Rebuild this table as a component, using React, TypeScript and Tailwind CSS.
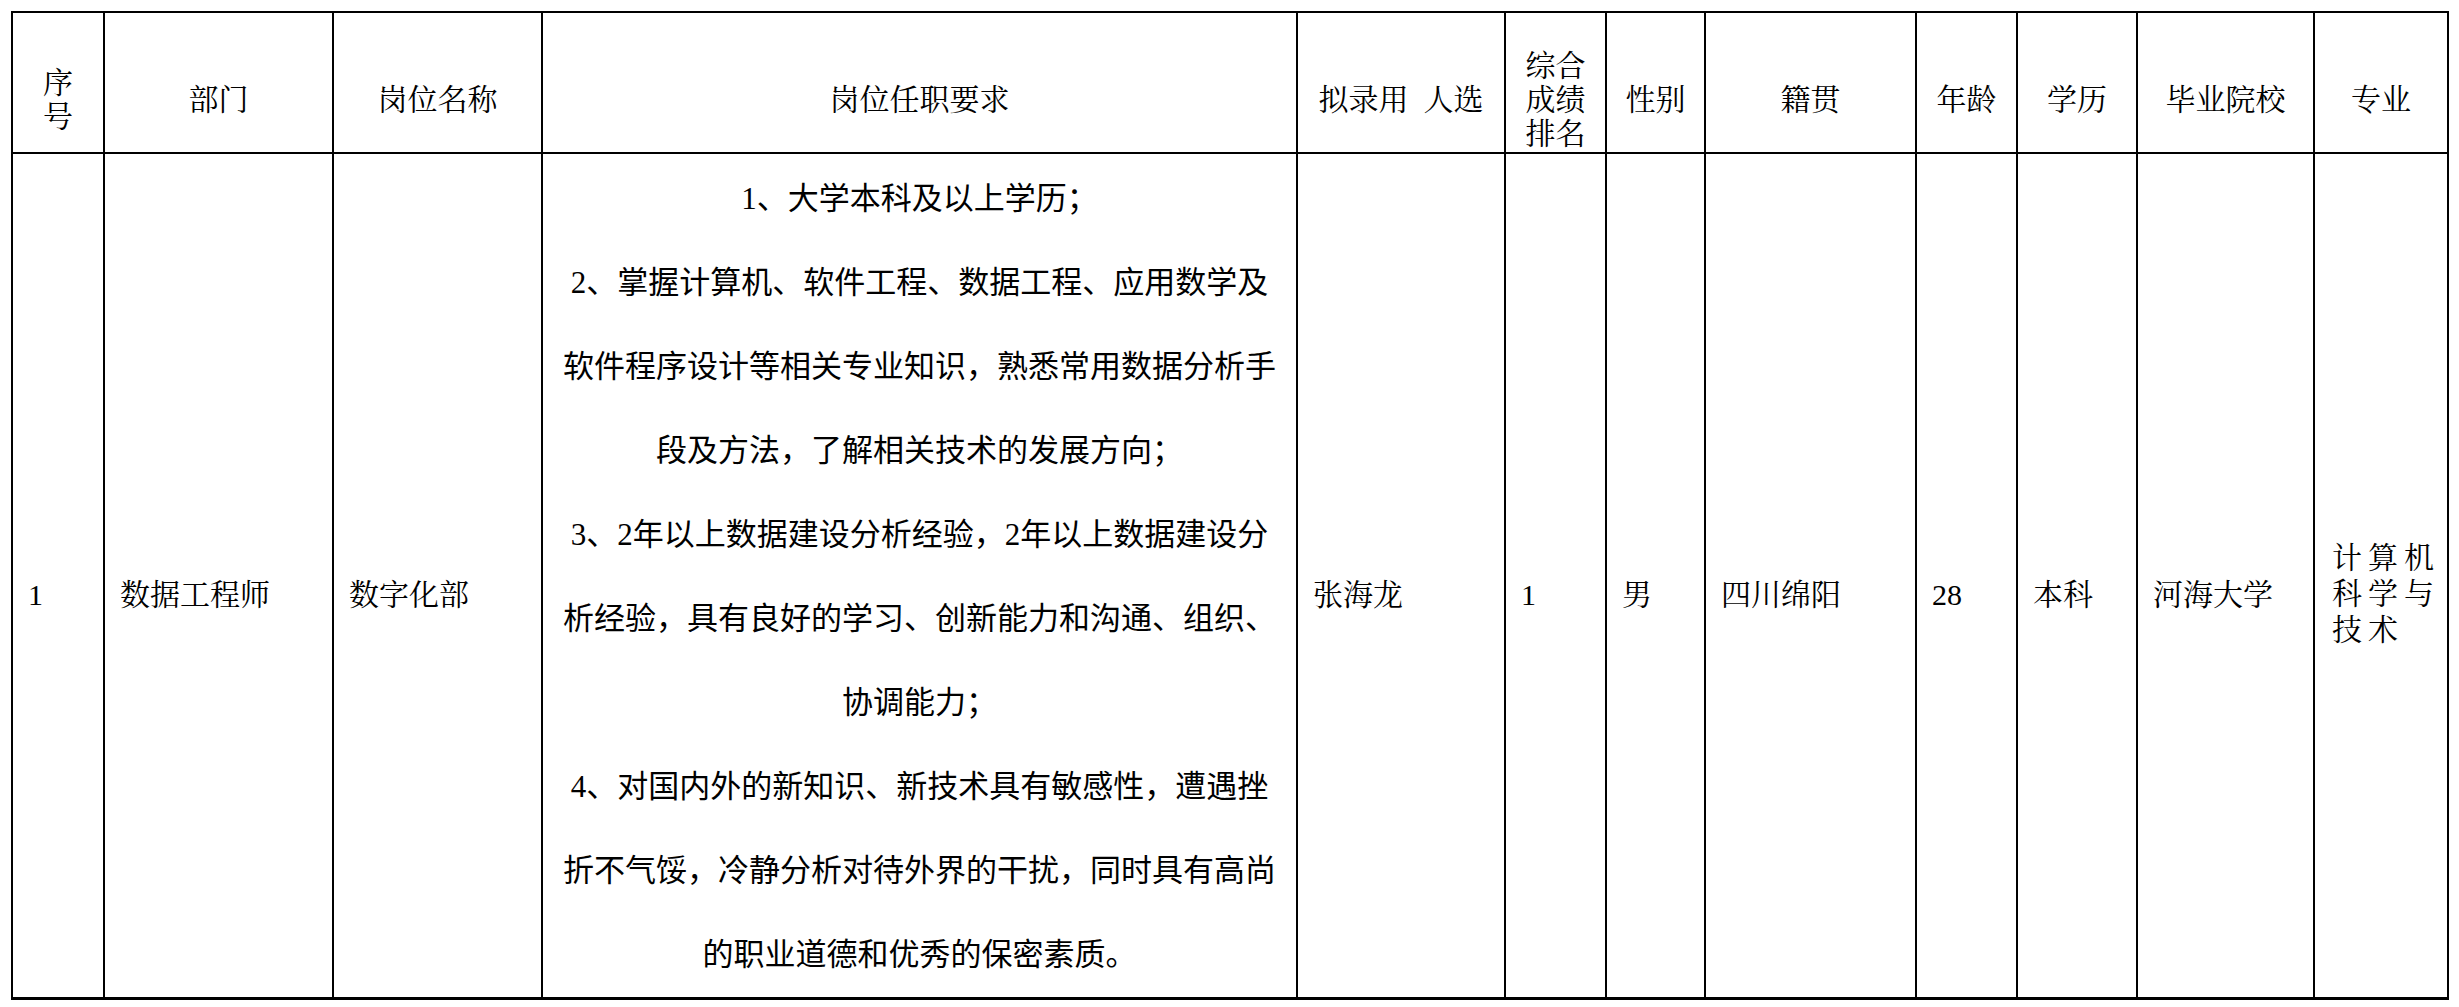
const HEADERS: string[][] = [
  ["序", "号"],
  ["部门"],
  ["岗位名称"],
  ["岗位任职要求"],
  ["拟录用\u2002人选"],
  ["综合", "成绩", "排名"],
  ["性别"],
  ["籍贯"],
  ["年龄"],
  ["学历"],
  ["毕业院校"],
  ["专业"],
];

const REQUIREMENTS = [
  "1、大学本科及以上学历；",
  "2、掌握计算机、软件工程、数据工程、应用数学及",
  "软件程序设计等相关专业知识，熟悉常用数据分析手",
  "段及方法，了解相关技术的发展方向；",
  "3、2年以上数据建设分析经验，2年以上数据建设分",
  "析经验，具有良好的学习、创新能力和沟通、组织、",
  "协调能力；",
  "4、对国内外的新知识、新技术具有敏感性，遭遇挫",
  "折不气馁，冷静分析对待外界的干扰，同时具有高尚",
  "的职业道德和优秀的保密素质。",
];

const BEFORE = ["1", "数据工程师", "数字化部"];
const AFTER = ["张海龙", "1", "男", "四川绵阳", "28", "本科", "河海大学"];
const MAJOR = ["计算机", "科学与", "技术"];

function BodyCell({ text }: { text: string }) {
  return (
    <div className="flex items-center bg-white pl-[15px] pt-[37px] whitespace-nowrap">{text}</div>
  );
}

export default function App() {
  return (
    <div className="min-h-screen bg-white pl-[11px] pt-[11px] text-black font-['Liberation_Serif','Noto_Serif_CJK_SC','Noto_Sans_CJK_SC',serif] text-[30px]">
      <div className="inline-grid grid-cols-[90px_227px_207px_753px_206px_99px_97px_209px_99px_118px_175px_132px] grid-rows-[139px_843px] gap-[2px] bg-black p-[2px] pb-[3px]">
        {HEADERS.map((lines, i) => (
          <div
            key={i}
            className="flex flex-col items-center justify-center bg-white pt-[34px] text-center leading-[34px] whitespace-nowrap"
          >
            {lines.map((l) => (
              <div key={l}>{l}</div>
            ))}
          </div>
        ))}

        {BEFORE.map((t, i) => (
          <BodyCell key={"b" + i} text={t} />
        ))}

        <div className="flex flex-col items-center bg-white pt-[3px] text-[31px] leading-[84px] font-['Liberation_Serif','Noto_Sans_CJK_SC',sans-serif]">
          {REQUIREMENTS.map((l) => (
            <div key={l} className="whitespace-nowrap">
              {l}
            </div>
          ))}
        </div>

        {AFTER.map((t, i) => (
          <BodyCell key={"a" + i} text={t} />
        ))}

        <div className="flex flex-col justify-center bg-white pl-[17px] pt-[37px] leading-[36px] tracking-[6px]">
          {MAJOR.map((l) => (
            <div key={l} className="whitespace-nowrap">
              {l}
            </div>
          ))}
        </div>
      </div>
    </div>
  );
}
